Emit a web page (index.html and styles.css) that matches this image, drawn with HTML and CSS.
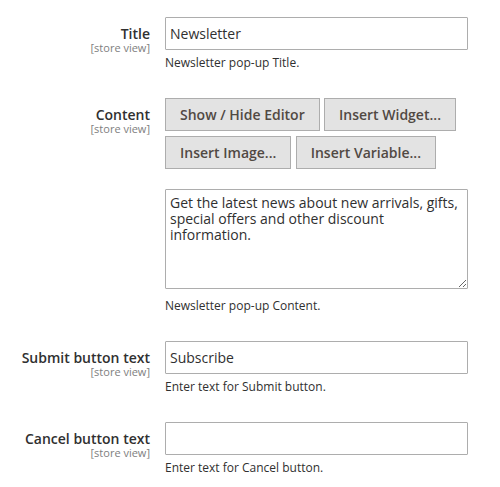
FILE: index.html
```html
<!DOCTYPE html>
<html lang="en">
<head>
<meta charset="utf-8">
<title>Newsletter pop-up</title>
<link rel="stylesheet" href="styles.css">
</head>
<body>
<form class="form">
  <div class="field">
    <label class="label"><span class="label-text">Title</span><span class="scope">[store view]</span></label>
    <div class="control">
      <input class="input" type="text" value="Newsletter">
      <div class="note">Newsletter pop-up Title.</div>
    </div>
  </div>

  <div class="field">
    <label class="label"><span class="label-text">Content</span><span class="scope">[store view]</span></label>
    <div class="control">
      <div class="buttons">
        <button type="button" class="btn">Show / Hide Editor</button>
        <button type="button" class="btn">Insert Widget...</button>
        <button type="button" class="btn">Insert Image...</button>
        <button type="button" class="btn">Insert Variable...</button>
      </div>
      <textarea class="textarea">Get the latest news about new arrivals, gifts, special offers and other discount information.</textarea>
      <div class="note note-ta">Newsletter pop-up Content.</div>
    </div>
  </div>

  <div class="field">
    <label class="label"><span class="label-text">Submit button text</span><span class="scope">[store view]</span></label>
    <div class="control">
      <input class="input" type="text" value="Subscribe">
      <div class="note">Enter text for Submit button.</div>
    </div>
  </div>

  <div class="field">
    <label class="label"><span class="label-text">Cancel button text</span><span class="scope">[store view]</span></label>
    <div class="control">
      <input class="input" type="text" value="">
      <div class="note">Enter text for Cancel button.</div>
    </div>
  </div>
</form>
</body>
</html>
```

FILE: styles.css
```css
* { box-sizing: border-box; }

html, body {
  margin: 0;
  background: #ffffff;
}

body {
  font-family: "Open Sans", "Liberation Sans", sans-serif;
  color: #303030;
}

.form {
  padding-top: 17px;
  display: flex;
  flex-direction: column;
  gap: 26px;
}

.field {
  display: grid;
  grid-template-columns: 150px 303px;
  column-gap: 15px;
}

.label {
  display: flex;
  flex-direction: column;
  align-items: flex-end;
  text-align: right;
  padding-top: 9px;
}

.label-text {
  font-size: 14px;
  line-height: 15px;
  font-weight: 600;
  color: #303030;
}

.scope {
  font-size: 11px;
  line-height: 13px;
  color: #808080;
}

.control {
  display: flex;
  flex-direction: column;
}

.input {
  display: block;
  width: 303px;
  height: 33px;
  margin: 0;
  padding: 0 4px;
  border: 1px solid #adadad;
  border-radius: 1px;
  background: #ffffff;
  font-family: "Open Sans", "Liberation Sans", sans-serif;
  font-size: 14px;
  color: #303030;
  outline: none;
}

.note {
  margin-top: 4px;
  font-size: 12px;
  line-height: 18px;
  color: #303030;
}

.note-ta {
  margin-top: 8px;
}

.buttons {
  display: flex;
  flex-wrap: wrap;
  column-gap: 4.3px;
  row-gap: 5px;
}

.btn {
  height: 33px;
  margin: 0;
  padding: 6px 14px;
  border: 1px solid #adadad;
  border-radius: 0;
  background: #e3e3e3;
  font-family: "Open Sans", "Liberation Sans", sans-serif;
  font-size: 14px;
  font-weight: 600;
  line-height: 19px;
  color: #514943;
  cursor: pointer;
}

.textarea {
  display: block;
  width: 303px;
  height: 100px;
  margin: 20px 0 0;
  padding: 5px 4px;
  border: 1px solid #adadad;
  border-radius: 1px;
  background: #ffffff;
  font-family: "Open Sans", "Liberation Sans", sans-serif;
  font-size: 14px;
  line-height: 16px;
  color: #303030;
  resize: vertical;
  outline: none;
}
```
